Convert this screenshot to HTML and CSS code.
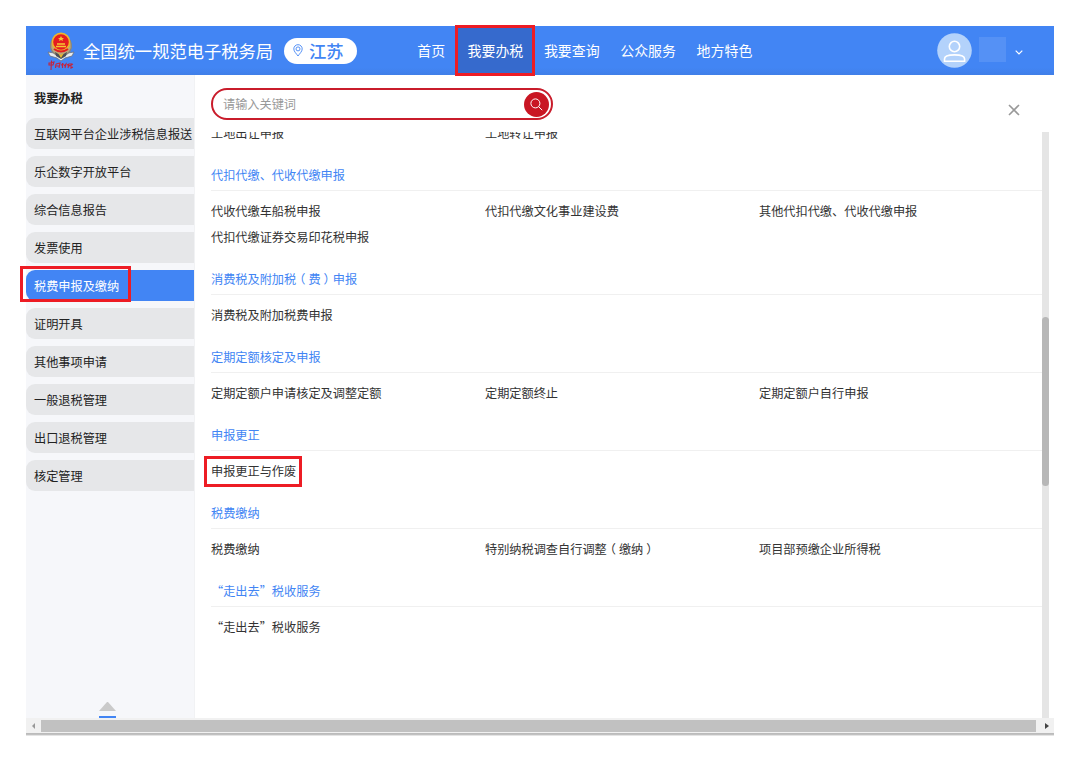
FILE: index.html
```html
<!DOCTYPE html>
<html lang="zh-CN">
<head>
    <meta charset="UTF-8">
    <title>全国统一规范电子税务局</title>
    <link rel="stylesheet" href="styles.css">
</head>
<body>
    <div class="app">
        <header class="header">
            <svg class="emblem" width="28" height="40" viewBox="0 0 28 40">
                <path d="M1 20 L7 21 L14 25 L21 21 L27 20 L25 24 L18 26 L14 29 L10 26 L3 24 Z" fill="#e9ebee" stroke="#69717f" stroke-width=".8"/>
                <path d="M5 8 Q1 17 8 22 L14 25 L20 22 Q27 17 23 8" fill="#bda77b" stroke="#8b8576" stroke-width="1.2"/>
                <path d="M8 20 L14 23.5 L20 20 L19 24 L14 27 L9 24 Z" fill="#4b4f58"/>
                <path d="M11 21 L14 23 L17 21 L14 26 Z" fill="#e8b92c"/>
                <circle cx="14" cy="10" r="8.6" fill="#e51c20" stroke="#eeb52b" stroke-width="1.6"/>
                <path d="M14 4 L15 6 L17 6 L15.5 7.3 L16 9 L14 8 L12 9 L12.5 7.3 L11 6 L13 6 Z" fill="#f6c733"/>
                <path d="M10 12 H18 M9 14.5 H19" fill="none" stroke="#f6c733" stroke-width="1.3"/>
                <path d="M7 17 Q14 22 21 17" fill="none" stroke="#e51c20" stroke-width="2"/>
                <g fill="none" stroke="#c6233b" stroke-width="1.1">
                    <path d="M2 31 L7 30 L6 33 L2 33 Z M4.5 28.5 L4 38"/>
                    <path d="M9 32 L8.5 36 M9 32 L13 31 L12 36 M9.5 34 H12"/>
                    <path d="M14 33 L17 32 M15.5 31 V36 M17 34 L19 32 L18 36"/>
                    <path d="M20 33 L22 32 L21 36 M22 34 L26 32 M24 31 V36 L26 35"/>
                </g>
            </svg>
            <h1 class="site-name">全国统一规范电子税务局</h1>
            <div class="region">
                <svg width="10" height="13" viewBox="0 0 10 13" fill="none" stroke="#4285f4" stroke-width="0.9">
                    <path d="M5 12 C3.5 9.8 .8 7.5 .8 4.9 A4.2 4.2 0 0 1 9.2 4.9 C9.2 7.5 6.5 9.8 5 12 Z"/>
                    <circle cx="5" cy="4.9" r="2"/>
                </svg>
                <span>江苏</span>
            </div>
            <nav class="nav">
                <a class="nav-item home">首页</a>
                <a class="nav-item active marked">我要办税</a>
                <a class="nav-item">我要查询</a>
                <a class="nav-item">公众服务</a>
                <a class="nav-item">地方特色</a>
            </nav>
            <div class="user">
                <svg width="35" height="35" viewBox="0 0 35 35">
                    <circle cx="17.5" cy="17.5" r="17.3" fill="#b3d2fb"/>
                    <g fill="none" stroke="#fff" stroke-width="1.6">
                        <circle cx="17.5" cy="13.5" r="5.2"/>
                        <path d="M7.5 28.3 V26 C7.5 23 12 21.9 17.5 21.9 S27.6 23 27.6 26 V28.3 Z"/>
                    </g>
                </svg>
                <span class="user-name"></span>
                <svg class="chevron" width="8" height="5" viewBox="0 0 8 5" fill="none" stroke="#fff" stroke-width="1.2">
                    <path d="M.7 .7 L4 4 L7.3 .7"/>
                </svg>
            </div>
        </header>

        <div class="main">
            <aside class="sidebar">
                <h2 class="sidebar-title">我要办税</h2>
                <ul class="menu">
                    <li class="menu-item">互联网平台企业涉税信息报送</li>
                    <li class="menu-item">乐企数字开放平台</li>
                    <li class="menu-item">综合信息报告</li>
                    <li class="menu-item">发票使用</li>
                    <li class="menu-item active marked">税费申报及缴纳</li>
                    <li class="menu-item">证明开具</li>
                    <li class="menu-item">其他事项申请</li>
                    <li class="menu-item">一般退税管理</li>
                    <li class="menu-item">出口退税管理</li>
                    <li class="menu-item">核定管理</li>
                </ul>
                <div class="back-top">
                    <span class="triangle"></span>
                    <span class="line"></span>
                </div>
            </aside>

            <section class="content">
                <div class="toolbar">
                    <div class="search">
                        <span class="placeholder">请输入关键词</span>
                        <button class="search-btn">
                            <svg width="13" height="13" viewBox="0 0 13 13" fill="none" stroke="#fff" stroke-width="1">
                                <circle cx="5.4" cy="5.4" r="4.5"/>
                                <path d="M8.7 8.7 L12.2 12.2"/>
                            </svg>
                        </button>
                    </div>
                    <svg class="close" width="12" height="12" viewBox="0 0 12 12" fill="none" stroke="#999" stroke-width="1.6">
                        <path d="M1 1 L11 11 M11 1 L1 11"/>
                    </svg>
                </div>

                <div class="scroll-area">
                    <div class="groups">
                        <div class="group-items first">
                            <a>土地出让申报</a>
                            <a>土地转让申报</a>
                        </div>

                        <h3 class="group-title">代扣代缴、代收代缴申报</h3>
                        <div class="group-items">
                            <a>代收代缴车船税申报</a>
                            <a>代扣代缴文化事业建设费</a>
                            <a>其他代扣代缴、代收代缴申报</a>
                            <a>代扣代缴证券交易印花税申报</a>
                        </div>

                        <h3 class="group-title">消费税及附加税<span class="paren-open">（</span>费<span class="paren-close">）</span>申报</h3>
                        <div class="group-items">
                            <a>消费税及附加税费申报</a>
                        </div>

                        <h3 class="group-title">定期定额核定及申报</h3>
                        <div class="group-items">
                            <a>定期定额户申请核定及调整定额</a>
                            <a>定期定额终止</a>
                            <a>定期定额户自行申报</a>
                        </div>

                        <h3 class="group-title">申报更正</h3>
                        <div class="group-items">
                            <a class="marked">申报更正与作废</a>
                        </div>

                        <h3 class="group-title">税费缴纳</h3>
                        <div class="group-items">
                            <a>税费缴纳</a>
                            <a>特别纳税调查自行调整<span class="paren-open">（</span>缴纳<span class="paren-close">）</span></a>
                            <a>项目部预缴企业所得税</a>
                        </div>

                        <h3 class="group-title">“走出去”税收服务</h3>
                        <div class="group-items">
                            <a>“走出去”税收服务</a>
                        </div>
                    </div>
                    <div class="scrollbar-y"><div class="thumb"></div></div>
                </div>
            </section>
        </div>

        <div class="scrollbar-x">
            <span class="arrow left"></span>
            <div class="thumb"></div>
            <span class="arrow right"></span>
        </div>
    </div>
</body>
</html>
```
FILE: styles.css
```css
*, *::after {
    box-sizing: border-box;
}
body {
    margin: 0;
    padding: 26px 26px 0;
    background: #fff;
    font-family: "Noto Sans CJK SC", sans-serif;
    font-size: 12.18px;
    color: #333;
}
h1, h2, h3, ul {
    margin: 0;
    padding: 0;
}
.app {
    width: 1028px;
    height: 710px;
    display: flex;
    flex-direction: column;
}

/* header */
.header {
    height: 49px;
    flex: none;
    display: flex;
    align-items: center;
    background: linear-gradient(#4285f4 85%, #407fe8);
    color: #fff;
}
.emblem {
    margin: 0 8px 0 21px;
    position: relative;
    top: 1px;
}
.site-name {
    width: 191px;
    font-size: 17.3px;
    font-weight: 400;
    line-height: 26px;
    white-space: nowrap;
}
.region {
    width: 73px;
    height: 26px;
    margin-left: 10px;
    padding-left: 9px;
    display: flex;
    align-items: center;
    gap: 6px;
    border-radius: 13px;
    background: #fff;
    color: #4285f4;
    font-size: 17.3px;
    font-weight: 500;
    line-height: 26px;
}
.nav {
    display: flex;
    height: 100%;
    margin-left: 50px;
}
.nav-item {
    padding: 0 10.3px;
    font-size: 13.95px;
    line-height: 49px;
}
.nav-item.home {
    margin-right: 1.8px;
}
.nav-item.active {
    background: #366acd;
}
.user {
    display: flex;
    align-items: center;
    margin-left: auto;
    margin-right: 31px;
}
.user-name {
    width: 27px;
    height: 25px;
    margin: 0 9px 0 7px;
    background: #5591f5;
    position: relative;
    top: -1px;
}
.chevron {
    margin-top: 3px;
}

/* red frame around the steps to follow */
.marked {
    position: relative;
}
.marked::after {
    content: "";
    position: absolute;
    border: 3px solid #ed1c24;
}
.nav-item.marked::after {
    inset: -1px -1px -1px -2px;
}
.menu-item.marked::after {
    left: -6px;
    top: -4px;
    width: 111px;
    height: 36px;
}
.group-items .marked::after {
    left: -7px;
    top: -2px;
    width: 98px;
    height: 31px;
}

.main {
    flex: 1;
    min-height: 0;
    display: flex;
}

/* sidebar */
.sidebar {
    width: 169px;
    display: flex;
    flex-direction: column;
    background: #f6f7fa;
    border-right: 1px solid #f1f2f4;
    color: #222;
}
.sidebar-title {
    padding: 13px 0 0 8px;
    font-size: 12.18px;
    font-weight: 700;
    line-height: 20px;
}
.menu {
    display: flex;
    flex-direction: column;
    gap: 7.05px;
    margin-top: 10px;
    list-style: none;
}
.menu-item {
    height: 31px;
    padding-left: 8px;
    border-radius: 9px 0 0 9px;
    background: #e6e7e9;
    line-height: 32px;
    white-space: nowrap;
}
.menu-item.active {
    background: #4285f4;
    color: #fff;
}
.back-top {
    width: 17px;
    margin: auto 0 0 73px;
}
.back-top span {
    display: block;
}
.triangle {
    border: 8.5px solid transparent;
    border-top: 0;
    border-bottom: 9px solid #cacaca;
}
.line {
    height: 2px;
    margin-top: 5px;
    background: #4285f4;
}

/* content */
.content {
    flex: 1;
    display: flex;
    flex-direction: column;
}
.toolbar {
    height: 57px;
    display: flex;
    justify-content: space-between;
    padding: 13px 34px 0 16px;
}
.search {
    width: 342px;
    height: 32px;
    display: flex;
    align-items: center;
    justify-content: space-between;
    padding: 0 2px 0 10px;
    border: 2px solid #c91c2b;
    border-radius: 16px;
}
.placeholder {
    color: #999;
}
.search-btn {
    width: 25px;
    height: 25px;
    padding: 0;
    display: flex;
    align-items: center;
    justify-content: center;
    border: 0;
    border-radius: 50%;
    background: #c91623;
}
.close {
    margin-top: 16px;
}
.scroll-area {
    flex: 1;
    min-height: 0;
    display: flex;
    padding: 0 5px 0 16px;
}
.groups {
    flex: 1;
    overflow: hidden;
    margin-left: -10px;
    padding-left: 10px;
}
.group-title {
    height: 31px;
    border-bottom: 1px solid #f0f0f0;
    color: #4285f4;
    font-size: 12.18px;
    font-weight: 400;
    line-height: 30px;
}
.group-items {
    display: grid;
    grid-template-columns: repeat(3, 274px);
    padding-top: 7px;
    margin-bottom: 14px;
    line-height: 26px;
}
.group-items.first {
    margin-top: -12px;
    padding-top: 0;
}
/* centre the full-width brackets */
.paren-open {
    margin: 0 3px 0 -3px;
}
.paren-close {
    margin: 0 -3px 0 3px;
}
.scrollbar-y {
    width: 7px;
    background: #e5e5e5;
}
.scrollbar-y .thumb {
    height: 169px;
    margin-top: 185px;
    border-radius: 4px;
    background: #b7b7b7;
}
.scrollbar-x {
    height: 18px;
    flex: none;
    display: flex;
    align-items: center;
    padding: 0 5px 3px 6px;
    background: linear-gradient(#f1f1f1 15px, #b8b8b8 15px, #c4c4c4 17px, #e4e4e4 17px);
}
.scrollbar-x .thumb {
    flex: 1;
    height: 12px;
    margin: 0 9px 0 6px;
    background: #c1c1c1;
}
.arrow {
    border: 3px solid transparent;
}
.arrow.left {
    border-left: 0;
    border-right-color: #999;
}
.arrow.right {
    border-right: 0;
    border-left: 4px solid #444;
}
```
